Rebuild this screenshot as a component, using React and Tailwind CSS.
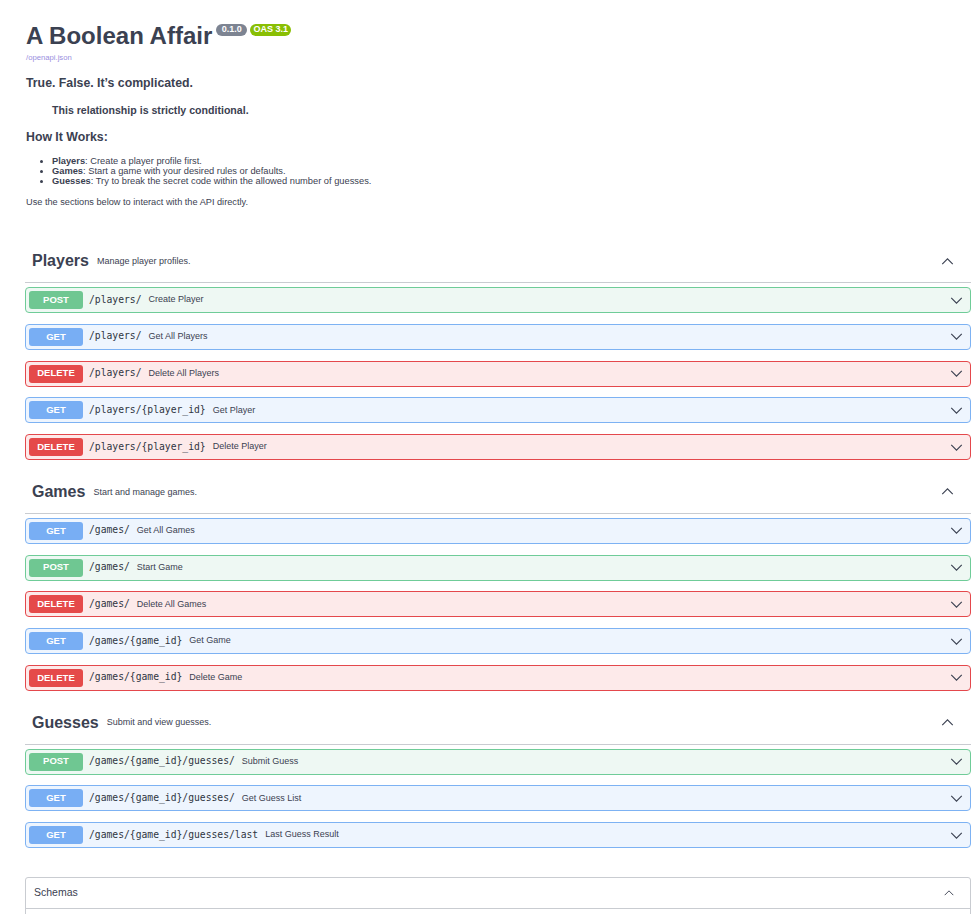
import React from 'react';

const sans = { fontFamily: '"Liberation Sans", Arial, sans-serif' };

const METHOD = {
  POST: { row: 'border-[#6fcc98] bg-[#eef8f3]', badge: 'bg-[#6fc792]' },
  GET: { row: 'border-[#7db2f3] bg-[#eef5fe]', badge: 'bg-[#78aef4]' },
  DELETE: { row: 'border-[#e4484c] bg-[#fdeaea]', badge: 'bg-[#e54a4a]' },
};

const sections = [
  {
    name: 'Players',
    desc: 'Manage player profiles.',
    ops: [
      ['POST', '/players/', 'Create Player'],
      ['GET', '/players/', 'Get All Players'],
      ['DELETE', '/players/', 'Delete All Players'],
      ['GET', '/players/{player_id}', 'Get Player'],
      ['DELETE', '/players/{player_id}', 'Delete Player'],
    ],
  },
  {
    name: 'Games',
    desc: 'Start and manage games.',
    ops: [
      ['GET', '/games/', 'Get All Games'],
      ['POST', '/games/', 'Start Game'],
      ['DELETE', '/games/', 'Delete All Games'],
      ['GET', '/games/{game_id}', 'Get Game'],
      ['DELETE', '/games/{game_id}', 'Delete Game'],
    ],
  },
  {
    name: 'Guesses',
    desc: 'Submit and view guesses.',
    ops: [
      ['POST', '/games/{game_id}/guesses/', 'Submit Guess'],
      ['GET', '/games/{game_id}/guesses/', 'Get Guess List'],
      ['GET', '/games/{game_id}/guesses/last', 'Last Guess Result'],
    ],
  },
];

function Chevron({ up = false, className = '' }) {
  return (
    <svg viewBox="0 0 14 8" className={className} fill="none" stroke="#3b4151" strokeWidth="1.3">
      {up ? <polyline points="1,7 7,1 13,7" /> : <polyline points="1,1 7,7 13,1" />}
    </svg>
  );
}

function Operation({ method, path, summary }) {
  const m = METHOD[method];
  return (
    <div className={`flex items-center h-[26px] mb-[10.75px] border rounded-[4px] pl-[3px] pr-[7px] ${m.row}`}>
      <span className={`w-[54px] h-[18px] rounded-[3px] flex items-center justify-center text-white font-bold text-[9.5px] ${m.badge}`}>
        {method}
      </span>
      <span
        className="ml-[6px] text-[9.7px] font-medium text-[#2f3542]"
        style={{ fontFamily: '"DejaVu Sans Mono", monospace' }}
      >
        {path}
      </span>
      <span className="ml-[7px] text-[9px] text-[#3b4151]">{summary}</span>
      <Chevron className="ml-auto w-[13px] h-[7px]" />
    </div>
  );
}

function TagSection({ name, desc, ops }) {
  return (
    <div>
      <div className="h-[43px] flex items-center border-b border-[#c9ccd1] pl-[7px] pr-[17px]">
        <span className="text-[16px] font-bold text-[#3b4151]">{name}</span>
        <span className="ml-[8px] mt-[1px] text-[9px] text-[#3b4151]">{desc}</span>
        <Chevron up className="ml-auto w-[13px] h-[7px]" />
      </div>
      <div className="mt-[4px]">
        {ops.map(([method, path, summary], i) => (
          <Operation key={i} method={method} path={path} summary={summary} />
        ))}
      </div>
    </div>
  );
}

export default function App() {
  return (
    <div className="h-[914px] overflow-hidden bg-white text-[#3b4151]" style={sans}>
      <div className="pl-[25px] pr-[5px]">
        {/* Info */}
        <div className="pl-[1px] pt-[24px]">
          <div className="flex items-start">
            <h1 className="text-[24px] leading-[24px] font-bold text-[#3b4151]">A Boolean Affair</h1>
            <span className="ml-[4px] w-[31px] h-[12px] rounded-full bg-[#7d8492] text-white text-[9px] font-bold flex items-center justify-center">
              0.1.0
            </span>
            <span className="ml-[3px] w-[41px] h-[12px] rounded-full bg-[#89bf04] text-white text-[9px] font-bold flex items-center justify-center">
              OAS 3.1
            </span>
          </div>
          <div className="mt-[5px] text-[7.7px] leading-[10px] text-[#9a8fe0]">/openapi.json</div>
          <div className="mt-[13px] text-[12.3px] leading-[14px] font-bold">True. False. It’s complicated.</div>
          <div className="mt-[14px] pl-[26px] text-[10.6px] leading-[13px] font-bold">
            This relationship is strictly conditional.
          </div>
          <div className="mt-[13px] text-[12.3px] leading-[14px] font-bold">How It Works:</div>
          <ul className="mt-[12px] pl-[26px] list-disc text-[9.3px] leading-[10px]">
            <li>
              <b>Players</b>: Create a player profile first.
            </li>
            <li>
              <b>Games</b>: Start a game with your desired rules or defaults.
            </li>
            <li>
              <b>Guesses</b>: Try to break the secret code within the allowed number of guesses.
            </li>
          </ul>
          <div className="mt-[11px] text-[9.2px] leading-[10px]">
            Use the sections below to interact with the API directly.
          </div>
        </div>

        {/* Operations */}
        <div className="mt-[33px]">
          {sections.map((s) => (
            <TagSection key={s.name} {...s} />
          ))}
        </div>

        {/* Schemas */}
        <div className="mt-[29px] border border-[#c9ccd1] rounded-[3px]">
          <div className="h-[31px] flex items-center justify-between border-b border-[#c9ccd1] pl-[8px] pr-[16px]">
            <span className="text-[10.5px] text-[#3b4151]">Schemas</span>
            <Chevron up className="w-[10px] h-[6px]" />
          </div>
          <div className="h-[80px]" />
        </div>
      </div>
    </div>
  );
}
